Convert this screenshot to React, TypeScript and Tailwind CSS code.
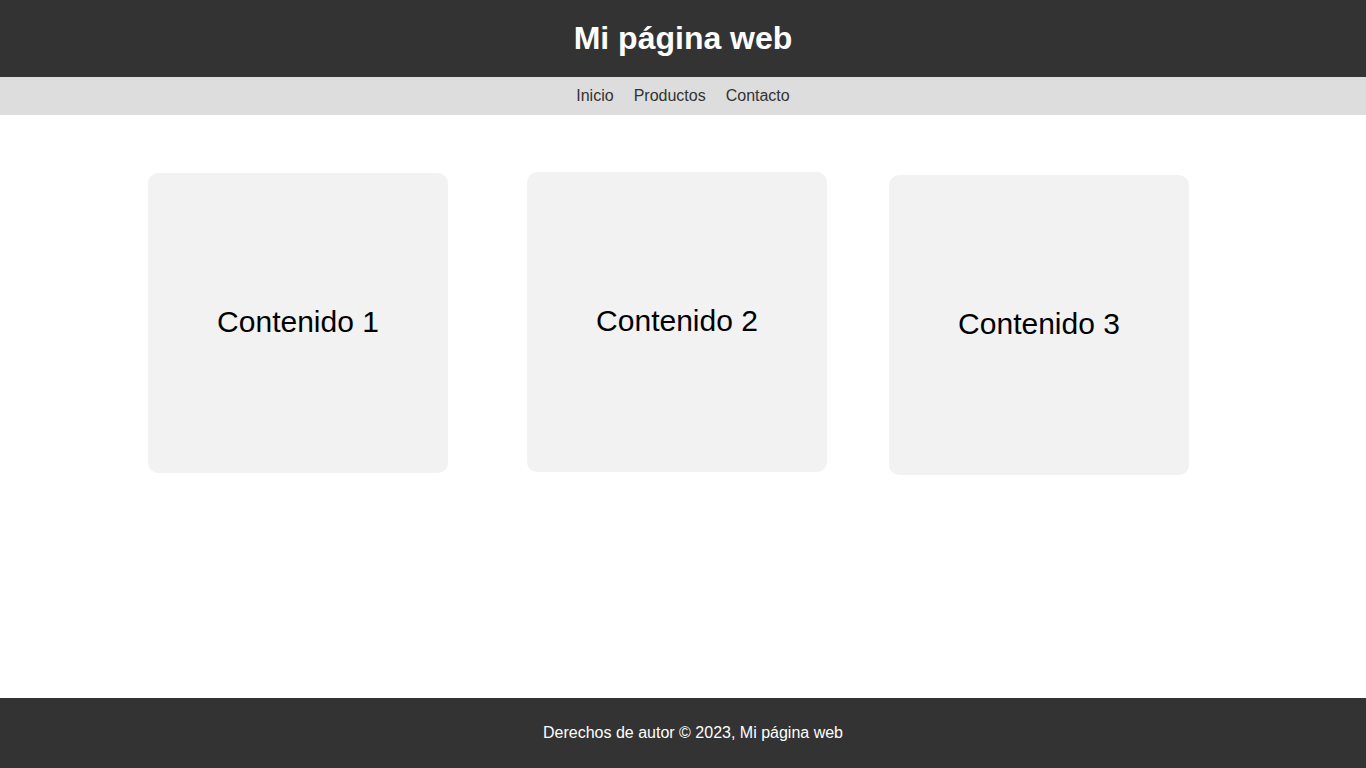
export default function App() {
  return (
    <div className="min-h-screen flex flex-col bg-white font-['Liberation_Sans',Arial,sans-serif]">
      <header className="h-[77px] pb-[2px] bg-[#333333] flex items-center justify-center">
        <h1 className="text-[32px] font-bold text-white leading-none">Mi página web</h1>
      </header>

      <nav className="h-[38px] bg-[#dddddd] flex items-center justify-center gap-5 text-[16px] text-[#333333]">
        <a href="#">Inicio</a>
        <a href="#">Productos</a>
        <a href="#">Contacto</a>
      </nav>

      <main className="flex-1 flex items-start">
        <div className="ml-[148px] mt-[58px] w-[300px] h-[300px] pb-[4px] rounded-[10px] bg-[#f2f2f2] flex items-center justify-center text-[30px] text-black">
          Contenido 1
        </div>
        <div className="ml-[79px] mt-[57px] w-[300px] h-[300px] pb-[4px] rounded-[10px] bg-[#f2f2f2] flex items-center justify-center text-[30px] text-black">
          Contenido 2
        </div>
        <div className="ml-[62px] mt-[60px] w-[300px] h-[300px] pb-[4px] rounded-[10px] bg-[#f2f2f2] flex items-center justify-center text-[30px] text-black">
          Contenido 3
        </div>
      </main>

      <footer className="h-[70px] pl-[20px] bg-[#333333] flex items-center justify-center text-[16px] text-white">
        Derechos de autor © 2023, Mi página web
      </footer>
    </div>
  )
}
